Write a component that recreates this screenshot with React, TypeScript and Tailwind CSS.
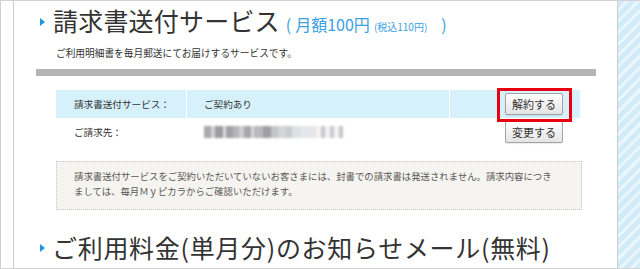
import React from 'react'

const blurBlocks = [
  { w: 7, c: '#a9a9ad' },
  { w: 4, c: '#d4d4d6' },
  { w: 8, c: '#9c9ca2' },
  { w: 3, c: '#dcdcdc' },
  { w: 7, c: '#a0a0a6' },
  { w: 6, c: '#b4b4ba' },
  { w: 5, c: '#cfcfd2' },
  { w: 7, c: '#a6a6ac' },
  { w: 3, c: '#d8d8d8' },
  { w: 9, c: '#b8b8bd' },
  { w: 8, c: '#9e9ea4' },
  { w: 7, c: '#c2c4c6' },
  { w: 8, c: '#d3d5d8' },
  { w: 6, c: '#c8ccce' },
  { w: 9, c: '#dde2e6' },
  { w: 7, c: '#e3e8ec' },
  { w: 8, c: '#e6e6e8' },
  { w: 5, c: '#f2f2f2' },
  { w: 4, c: '#c9c9cc' },
  { w: 5, c: '#f2f2f2' },
  { w: 4, c: '#cbcbce' },
  { w: 5, c: '#f2f2f2' },
  { w: 4, c: '#c6c6c9' },
]

function Marker() {
  return (
    <svg width="5" height="8" viewBox="0 0 5 8" className="shrink-0">
      <polygon points="0,0 5,4 0,8" fill="#1b98dc" />
    </svg>
  )
}

function Btn({ label }: { label: string }) {
  return (
    <button className="h-[22px] px-[6px] border border-[#a3a3a3] rounded-[2px] bg-[linear-gradient(#ffffff,#e4e4e4)] text-[11px] leading-[20px] text-[#333] shadow-[0_1px_1px_rgba(0,0,0,0.08)]">
      {label}
    </button>
  )
}

export default function App() {
  return (
    <div className="w-[640px] h-[269px] overflow-hidden flex bg-white border-t border-l border-b border-[#d2d2d2] font-['Noto_Sans_CJK_JP','Noto_Sans',sans-serif] text-[#333]">
      <div className="w-[12px] shrink-0" />

      <div className="w-[605px] shrink-0 border-x border-[#cdcdcd] bg-white">
        {/* heading */}
        <div className="flex items-center ml-[26px] mt-[8px] h-[25px]">
          <Marker />
          <div className="flex items-baseline ml-[8px]">
            <h2 className="text-[25px] leading-[25px] font-normal text-[#333] tracking-[0.2px]">請求書送付サービス</h2>
            <span className="ml-[6px] text-[16px] text-[#3aa0e2]">(</span>
            <span className="ml-[4px] text-[16px] text-[#3aa0e2]">月額100円</span>
            <span className="ml-[4px] text-[10px] text-[#3aa0e2]">(税込110円)</span>
            <span className="ml-[14px] text-[16px] text-[#3aa0e2]">)</span>
          </div>
        </div>

        <p className="ml-[42px] mt-[12px] text-[9.7px] leading-[14px]">ご利用明細書を毎月郵送にてお届けするサービスです。</p>

        <div className="ml-[22px] mt-[9px] w-[560px] h-[7px] bg-[#b4b4b4]" />

        {/* table */}
        <div className="ml-[42px] mt-[14px] w-[524px] text-[9.6px]">
          <div className="flex h-[28px] bg-[#d6f1fc]">
            <div className="w-[131px] border-r border-white pl-[18px] flex items-center">請求書送付サービス：</div>
            <div className="w-[263px] border-r border-white pl-[17px] flex items-center">ご契約あり</div>
            <div className="flex-1 flex items-center pl-[55px]">
              <div className="relative">
                <Btn label="解約する" />
                <span className="absolute -left-[8px] -top-[5px] -right-[9px] -bottom-[7px] border-[3px] border-[#e60012]" />
              </div>
            </div>
          </div>
          <div className="flex h-[28px]">
            <div className="w-[131px] pl-[18px] flex items-center">ご請求先：</div>
            <div className="w-[263px] pl-[17px] flex items-center">
              <div className="flex h-[12px] blur-[1px]">
                {blurBlocks.map((b, i) => (
                  <span key={i} style={{ width: b.w, backgroundColor: b.c }} className="h-full" />
                ))}
              </div>
            </div>
            <div className="flex-1 flex items-center pl-[55px]">
              <Btn label="変更する" />
            </div>
          </div>
        </div>

        {/* note */}
        <div className="ml-[42px] mt-[15px] w-[526px] h-[49px] border border-dotted border-[#c4c4c4] bg-[#f5f4f1] pl-[17px] pt-[7px] text-[9.4px] leading-[15px] text-[#5a5654]">
          <p>請求書送付サービスをご契約いただいていないお客さまには、封書での請求書は発送されません。請求内容につき</p>
          <p>ましては、毎月Ｍｙピカラからご確認いただけます。</p>
        </div>

        {/* next heading */}
        <div className="flex items-center ml-[26px] mt-[25px] h-[25px]">
          <Marker />
          <h2 className="ml-[7px] text-[25px] leading-[25px] font-normal text-[#333] whitespace-nowrap tracking-[0.7px]">ご利用料金(単月分)のお知らせメール(無料)</h2>
        </div>
      </div>

      <div className="flex-1 bg-[repeating-linear-gradient(135deg,#d2ebf8_0px,#d2ebf8_5px,#eaf6fc_5px,#eaf6fc_8px)]" />
    </div>
  )
}
